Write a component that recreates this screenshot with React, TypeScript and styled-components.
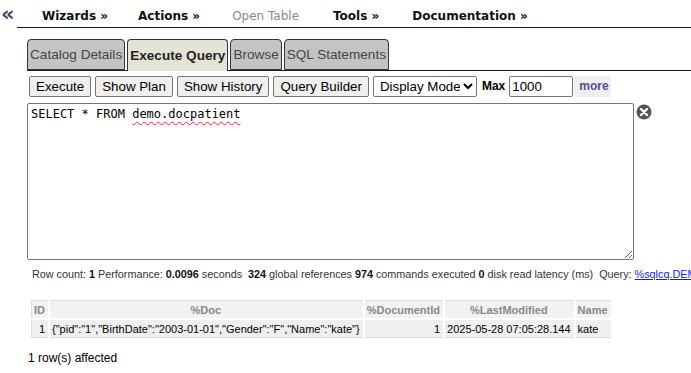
import React from "react";
import styled, { createGlobalStyle } from "styled-components";

const Global = createGlobalStyle`
  html, body { margin: 0; padding: 0; background: #fff; overflow: hidden; }
  body { font-family: "Liberation Sans", Arial, sans-serif; }
`;

const Page = styled.div`
  width: 691px;
  height: 373px;
  overflow: hidden;
  position: relative;
`;

const MenuBar = styled.div`
  display: flex;
  align-items: flex-end;
  height: 28px;
`;

const Collapse = styled.span`
  width: 17px;
  align-self: flex-start;
  padding-top: 3px;
  padding-left: 1px;
  box-sizing: border-box;
  font-family: "DejaVu Sans", Verdana, sans-serif;
  font-weight: bold;
  font-size: 21px;
  line-height: 22px;
  color: #3e4a66;
  letter-spacing: -3px;
`;

const MenuLine = styled.div`
  flex: 1;
  display: flex;
  height: 28px;
  align-items: center;
  border-bottom: 1px solid #10105a;
  box-sizing: border-box;
  padding-left: 25px;
  padding-top: 4px;
`;

const MenuItem = styled.span<{ $muted?: boolean; $gap: number }>`
  font-family: Verdana, "DejaVu Sans", sans-serif;
  font-size: 12px;
  font-weight: ${(p) => (p.$muted ? "normal" : "bold")};
  color: ${(p) => (p.$muted ? "#888" : "#111")};
  margin-right: ${(p) => p.$gap}px;
  white-space: nowrap;
`;

const Content = styled.div`
  padding-left: 27px;
`;

const TabRow = styled.div`
  display: flex;
  align-items: flex-end;
  gap: 2px;
  margin-top: 10px;
  height: 32px;
  border-bottom: 1px solid #222;
`;

const Tab = styled.div<{ $active?: boolean }>`
  height: ${(p) => (p.$active ? "32px" : "31px")};
  box-sizing: border-box;
  padding: 0 2px;
  display: flex;
  align-items: center;
  border: 1px solid #333;
  border-bottom: ${(p) => (p.$active ? "none" : "1px solid #333")};
  border-radius: 4px 4px 0 0;
  margin-bottom: ${(p) => (p.$active ? "-1px" : "0")};
  background: ${(p) => (p.$active ? "#e4e4d6" : "#c4c4c4")};
  font-size: 13.6px;
  font-weight: ${(p) => (p.$active ? "bold" : "normal")};
  color: ${(p) => (p.$active ? "#222" : "#444")};
  white-space: nowrap;
`;

const Toolbar = styled.div`
  display: flex;
  align-items: center;
  gap: 3px;
  margin-top: 4px;
  padding-left: 2px;
  height: 22px;
`;

const Button = styled.button`
  font-family: "Liberation Sans", Arial, sans-serif;
  font-size: 13.333px;
  height: 21px;
  padding: 0 6px;
  background: #efefef;
  border: 1px solid #767676;
  border-radius: 2px;
  color: #000;
  margin-right: 1px;
`;

const Select = styled.select`
  font-family: "Liberation Sans", Arial, sans-serif;
  font-size: 13.333px;
  height: 21px;
  width: 104px;
  border: 1px solid #767676;
  border-radius: 2px;
  background: #fff;
  color: #000;
  padding: 0 0 0 2px;
`;

const MaxLabel = styled.span`
  font-size: 12px;
  font-weight: bold;
  margin-left: 2px;
`;

const MaxInput = styled.input`
  font-family: "Liberation Sans", Arial, sans-serif;
  font-size: 13.333px;
  width: 64px;
  height: 21px;
  box-sizing: border-box;
  border: 1px solid #767676;
  border-radius: 2px;
  padding: 0 2px;
  margin-left: 1px;
`;

const MoreBox = styled.span`
  display: flex;
  align-items: center;
  height: 21px;
  margin-left: -2px;
  padding: 0 2px 0 5px;
  background: #efefef;
`;

const MoreLink = styled.a`
  font-size: 12px;
  font-weight: bold;
  color: #5a4a9a;
  text-decoration: none;
`;

const EditorRow = styled.div`
  display: flex;
  align-items: flex-start;
  margin-top: 6px;
`;

const Editor = styled.div`
  width: 607px;
  height: 157px;
  box-sizing: border-box;
  border: 1px solid #767676;
  border-radius: 2px;
  padding: 3px 3px;
  font-family: "DejaVu Sans Mono", Consolas, monospace;
  font-size: 12px;
  line-height: 15px;
  color: #000;
  resize: both;
  overflow: auto;
  white-space: pre;
`;

const Misspelled = styled.span`
  text-decoration: underline wavy #e03030;
  text-decoration-thickness: 1px;
  text-underline-offset: 3px;
`;

const CloseIcon = styled.svg`
  margin-left: 2px;
  margin-top: 1px;
  flex: none;
`;

const Stats = styled.div`
  margin-top: 8px;
  padding-left: 5px;
  font-size: 10.8px;
  color: #333;
  white-space: nowrap;
  b { color: #111; }
`;

const QueryLink = styled.a`
  color: #1a1ae6;
  text-decoration: underline;
`;

const ResultTable = styled.table`
  margin-top: 20px;
  margin-left: 4px;
  border-collapse: collapse;
  font-size: 11px;
  border: 1px solid #dcdcdc;
`;

const Th = styled.th<{ $align?: string }>`
  background: #f2f2f2;
  color: #888;
  font-weight: bold;
  text-align: ${(p) => p.$align || "center"};
  padding: 1px 3px 1px 2px;
  height: 15px;
  border: 2px solid #fff;
  border-top: none;
  border-left: none;
  white-space: nowrap;
`;

const Td = styled.td<{ $align?: string }>`
  background: #efefef;
  color: #000;
  text-align: ${(p) => p.$align || "left"};
  padding: 1px 3px 1px 2px;
  height: 15px;
  border-right: 2px solid #fff;
  white-space: nowrap;
`;

const Affected = styled.div`
  margin-top: 13px;
  padding-left: 1px;
  font-size: 12px;
  color: #000;
`;

const menu = [
  { label: "Wizards »", gap: 30 },
  { label: "Actions »", gap: 32 },
  { label: "Open Table", gap: 34 },
  { label: "Tools »", gap: 33 },
  { label: "Documentation »", gap: 0 },
];

const tabs = ["Catalog Details", "Execute Query", "Browse", "SQL Statements"];

export default function App() {
  return (
    <Page>
      <Global />
      <MenuBar>
        <Collapse>«</Collapse>
        <MenuLine>
          {menu.map((m) => (
            <MenuItem key={m.label} $muted={m.label === "Open Table"} $gap={m.gap}>
              {m.label}
            </MenuItem>
          ))}
        </MenuLine>
      </MenuBar>
      <Content>
        <TabRow>
          {tabs.map((t) => (
            <Tab key={t} $active={t === "Execute Query"}>
              {t}
            </Tab>
          ))}
        </TabRow>
        <Toolbar>
          <Button>Execute</Button>
          <Button>Show Plan</Button>
          <Button>Show History</Button>
          <Button>Query Builder</Button>
          <Select defaultValue="dm">
            <option value="dm">Display Mode</option>
          </Select>
          <MaxLabel>Max</MaxLabel>
          <MaxInput defaultValue="1000" />
          <MoreBox>
            <MoreLink href="#">more</MoreLink>
          </MoreBox>
        </Toolbar>
        <EditorRow>
          <Editor>
            SELECT * FROM <Misspelled>demo.docpatient</Misspelled>
          </Editor>
          <CloseIcon width="16" height="16" viewBox="0 0 16 16">
            <circle cx="8" cy="8" r="7.5" fill="#555" />
            <path d="M5 5 L11 11 M11 5 L5 11" stroke="#fff" strokeWidth="2.4" strokeLinecap="round" />
          </CloseIcon>
        </EditorRow>
        <Stats>
          Row count: <b>1</b> Performance: <b>0.0096</b> seconds&nbsp; <b>324</b> global references{" "}
          <b>974</b> commands executed <b>0</b> disk read latency (ms)&nbsp; Query:{" "}
          <QueryLink href="#">%sqlcq.DEMO.cls1</QueryLink>
        </Stats>
        <ResultTable>
          <thead>
            <tr>
              <Th $align="left">ID</Th>
              <Th>%Doc</Th>
              <Th>%DocumentId</Th>
              <Th>%LastModified</Th>
              <Th>Name</Th>
            </tr>
          </thead>
          <tbody>
            <tr>
              <Td $align="right">1</Td>
              <Td>{'{"pid":"1","BirthDate":"2003-01-01","Gender":"F","Name":"kate"}'}</Td>
              <Td $align="right">1</Td>
              <Td>2025-05-28 07:05:28.144</Td>
              <Td>kate</Td>
            </tr>
          </tbody>
        </ResultTable>
        <Affected>1 row(s) affected</Affected>
      </Content>
    </Page>
  );
}
